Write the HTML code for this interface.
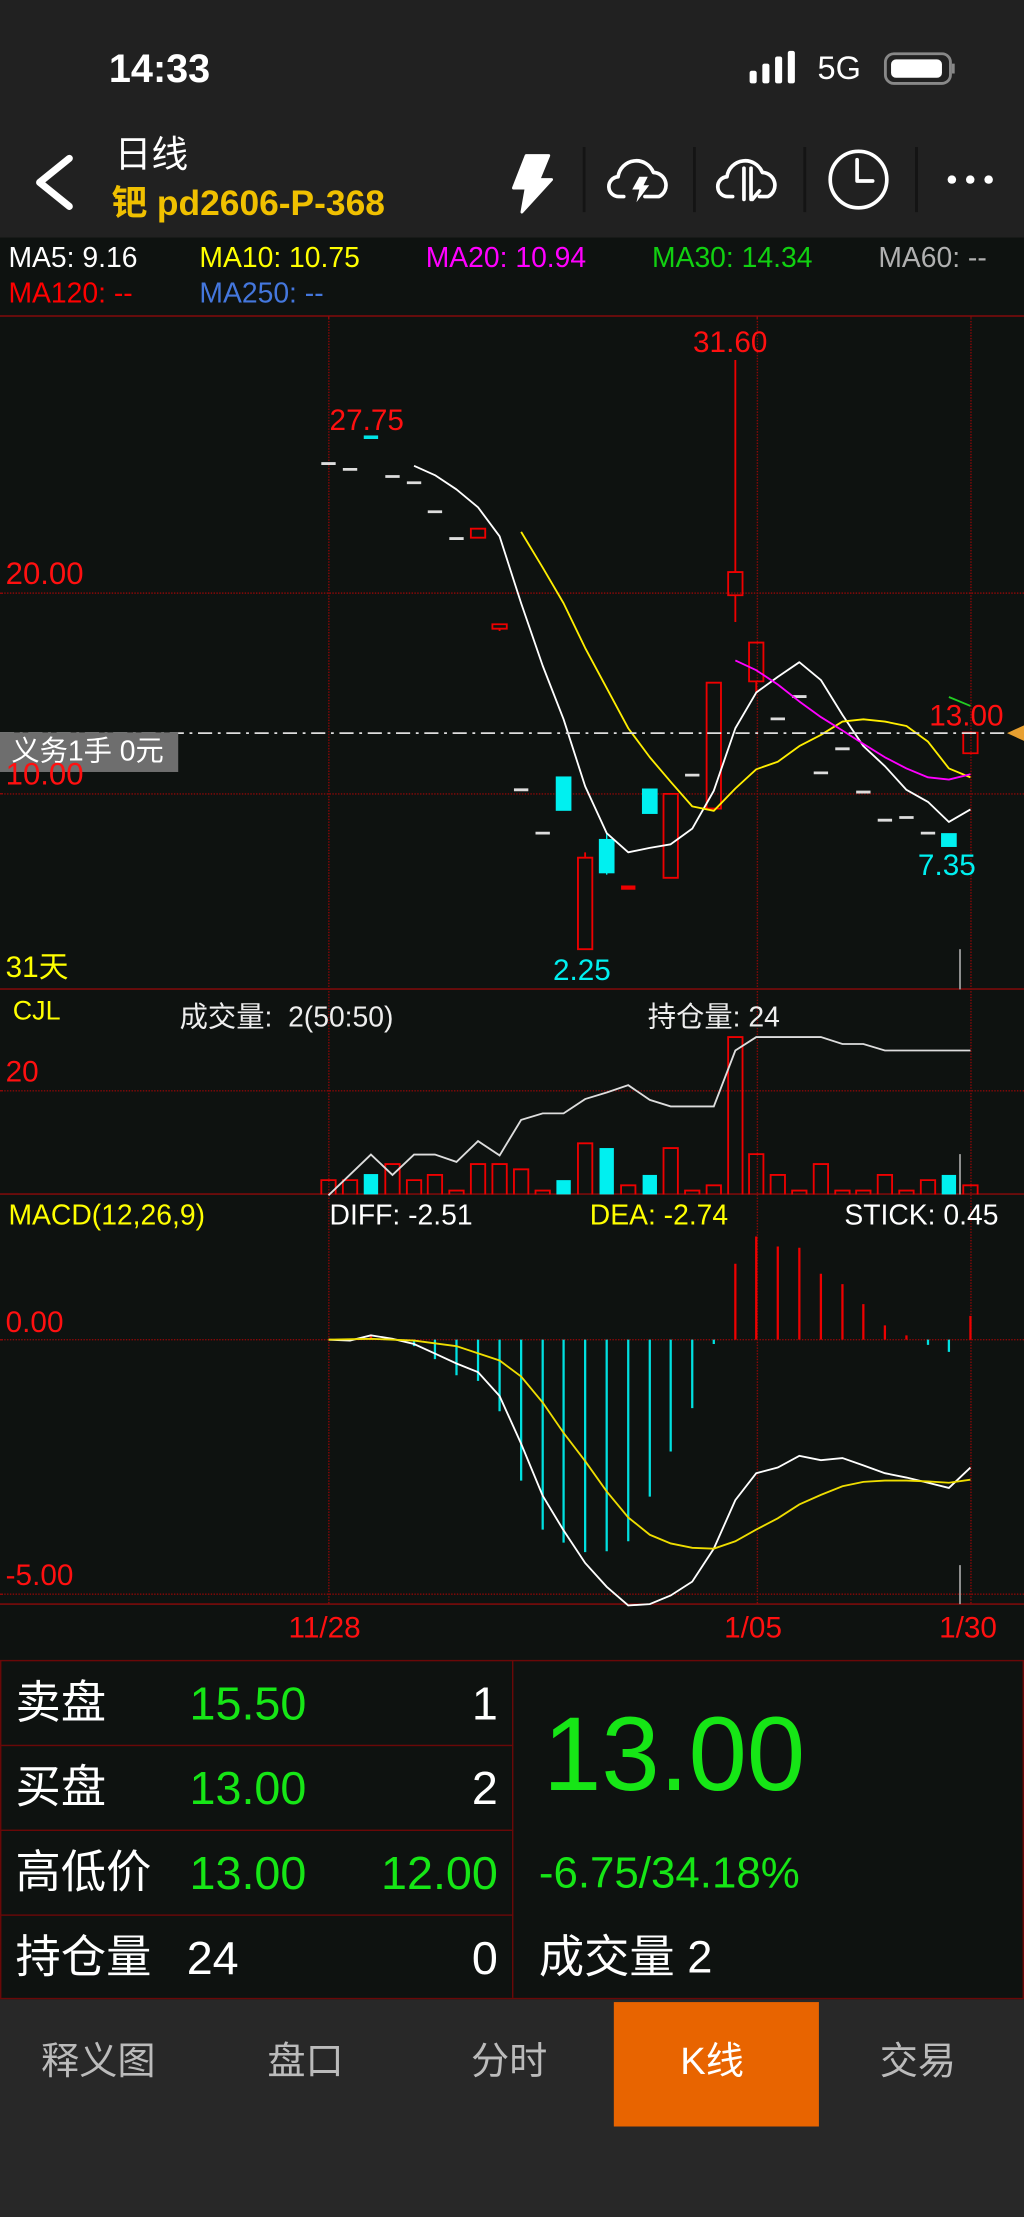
<!DOCTYPE html>
<html><head><meta charset="utf-8">
<style>
*{margin:0;padding:0;box-sizing:border-box}
html,body{width:1024px;height:2217px;overflow:hidden;background:#282828}
#w{position:absolute;left:0;top:0;width:724px;height:1568px;transform:scale(1.41436,1.4139);transform-origin:0 0;font-family:"Liberation Sans","Noto Sans CJK SC",sans-serif;background:#282828}
.a{position:absolute;white-space:nowrap}
.t{position:absolute;white-space:nowrap;line-height:1}
.vg{position:absolute;width:0;border-left:1px dotted #8a0808}
.hg{position:absolute;height:0;border-top:1px dotted #8a0808;left:0;width:724px}
.hs{position:absolute;height:0;border-top:1px solid #8a0a0a;left:0;width:724px}
svg{position:absolute;overflow:visible}
.g{color:#16e616}
.w{color:#fff}
</style></head><body><div id="w">
<!-- status+header -->
<div class="a" style="left:0;top:0;width:724px;height:168px;background:#212121"></div>
<div class="t w" style="left:77px;top:35px;font-size:28px;font-weight:bold">14:33</div>
<svg style="left:0;top:0" width="724" height="168">
 <g fill="#fff">
  <rect x="530" y="50" width="5" height="9" rx="1.5"/><rect x="539" y="45" width="5" height="14" rx="1.5"/><rect x="548" y="40" width="5" height="19" rx="1.5"/><rect x="557" y="36" width="5" height="23" rx="1.5"/>
 </g>
 <rect x="626" y="38" width="46" height="21" rx="6" fill="none" stroke="#888" stroke-width="2"/>
 <rect x="630" y="42" width="36" height="13" rx="3.5" fill="#fff"/>
 <path d="M674 45 v7" stroke="#888" stroke-width="2"/>
 <path d="M49 112 L28 129 L49 146" fill="none" stroke="#fff" stroke-width="5" stroke-linecap="round" stroke-linejoin="round"/>
 <path d="M372 110 L388 110 L381 127 L390 127 L369 150 L372 133 L363 133 Z" fill="#fff" stroke="#fff" stroke-width="2" stroke-linejoin="round"/>
 <g stroke="#141414" stroke-width="2"><path d="M413 104V150M491 104V150M569 104V150M648 104V150"/></g>
 <g fill="none" stroke="#fff" stroke-width="2.6" stroke-linecap="round" stroke-linejoin="round">
  <path d="M441 139 h-3 a7 7 0 0 1 -1 -14 a13 13 0 0 1 25 -3 a9 9 0 0 1 4 17 h-10"/>
  <path d="M518 139 h-3 a7 7 0 0 1 -1 -14 a13 13 0 0 1 25 -3 a9 9 0 0 1 4 17 h-6"/>
  <path d="M526 141 V119 M531 141 V119 M532 141 l5 -6"/>
  <circle cx="607" cy="127" r="20"/>
  <path d="M606 113 V128 H617"/>
 </g>
 <path d="M452 125 L458 125 L455 131 L459 131 L450 143 L452 134 L447 134 Z" fill="#fff"/>
 <g fill="#fff"><circle cx="673" cy="127" r="3"/><circle cx="686" cy="127" r="3"/><circle cx="699" cy="127" r="3"/></g>
</svg>
<div class="t" style="left:603px;top:37px;font-size:23px;color:#fff;left:578px">5G</div>
<div class="t w" style="left:81px;top:96px;font-size:26px">日线</div>
<div class="t" style="left:79px;top:132px;font-size:25px;font-weight:bold;color:#f0c000">钯 pd2606-P-368</div>

<!-- chart area -->
<div class="a" style="left:0;top:168px;width:724px;height:1006px;background:#0e1210"></div>
<div class="t" style="left:6px;top:173px;font-size:20px;color:#fff">MA5: 9.16</div>
<div class="t" style="left:141px;top:173px;font-size:20px;color:#ffff00">MA10: 10.75</div>
<div class="t" style="left:301px;top:173px;font-size:20px;color:#ff00ff">MA20: 10.94</div>
<div class="t" style="left:461px;top:173px;font-size:20px;color:#11d011">MA30: 14.34</div>
<div class="t" style="left:621px;top:173px;font-size:20px;color:#b0b0b0">MA60: --</div>
<div class="t" style="left:6px;top:198px;font-size:20px;color:#ff0000">MA120: --</div>
<div class="t" style="left:141px;top:198px;font-size:20px;color:#4477dd">MA250: --</div>

<div class="hs" style="top:223px"></div>
<div class="hs" style="top:699px"></div>
<div class="hs" style="top:844px"></div>
<div class="hs" style="top:1134px"></div>
<div class="hg" style="top:419px"></div>
<div class="hg" style="top:561px"></div>
<div class="hg" style="top:771px"></div>
<div class="hg" style="top:947px"></div>
<div class="hg" style="top:1127px"></div>
<div class="vg" style="left:232px;top:224px;height:910px"></div>
<div class="vg" style="left:535px;top:224px;height:910px"></div>
<div class="vg" style="left:686px;top:224px;height:910px"></div>

<!-- main candles: viewBox mapped from zoom coords -->
<svg style="left:0;top:212.1px" width="724" height="495" viewBox="0 0 1568 1568" preserveAspectRatio="none">
 <g stroke="#ddd" stroke-width="2" vector-effect="non-scaling-stroke">
  <path vector-effect="non-scaling-stroke" d="M492 367h22M525 380h22M590 396h22M623 410h22M655 475h22M688 535h22M787 1098h22M820 1195h22M1049 1065h22M1180 939h22M1213 889h22M1246 1060h22M1279 1006h22M1311 1103h22M1344 1166h22M1377 1160h22M1410 1195h22"/>
 </g>
 <path vector-effect="non-scaling-stroke" d="M557 308h22" stroke="#00e5e5" stroke-width="2.5"/>
 <path vector-effect="non-scaling-stroke" d="M951 1317h22" stroke="#ee0000" stroke-width="3"/>
 <g fill="none" stroke="#ee0000" stroke-width="1.3">
  <rect vector-effect="non-scaling-stroke" x="721" y="513" width="22" height="20"/>
  <rect vector-effect="non-scaling-stroke" x="754" y="727" width="22" height="10"/>
  <rect vector-effect="non-scaling-stroke" x="885" y="1250" width="22" height="205"/>
  <rect vector-effect="non-scaling-stroke" x="1016" y="1107" width="22" height="188"/>
  <rect vector-effect="non-scaling-stroke" x="1082" y="858" width="22" height="282"/>
  <rect vector-effect="non-scaling-stroke" x="1115" y="610" width="22" height="52"/>
  <rect vector-effect="non-scaling-stroke" x="1147" y="768" width="22" height="87"/>
  <rect vector-effect="non-scaling-stroke" x="1475" y="970" width="22" height="46"/>
  <path vector-effect="non-scaling-stroke" d="M1126 135V610M1126 662V722M896 1238V1250M1158 855V880M765 737V742"/>
 </g>
 <g fill="#00f0f0">
  <rect x="851" y="1068" width="24" height="77"/>
  <rect x="917" y="1208" width="24" height="77"/>
  <rect x="983" y="1095" width="24" height="57"/>
  <rect x="1441" y="1195" width="24" height="31"/>
 </g>
 <path vector-effect="non-scaling-stroke" d="M929 1195V1288" stroke="#00f0f0" stroke-width="1"/>
 <g fill="none" stroke-width="1.3" stroke-linejoin="round">
  <polyline vector-effect="non-scaling-stroke" stroke="#fff" points="634,372 666,393 699,425 732,465 765,530 798,680 831,820 863,940 896,1090 929,1195 962,1238 995,1228 1027,1220 1060,1185 1093,1100 1126,960 1158,880 1191,845 1224,812 1257,852 1290,930 1322,1000 1355,1045 1388,1098 1421,1125 1453,1170 1486,1142"/>
  <polyline vector-effect="non-scaling-stroke" stroke="#ffee00" points="798,520 831,600 863,680 896,780 929,870 962,960 995,1025 1027,1080 1060,1135 1093,1145 1126,1095 1158,1052 1191,1035 1224,1000 1257,975 1290,945 1322,940 1355,945 1388,955 1421,990 1453,1050 1486,1070"/>
  <polyline vector-effect="non-scaling-stroke" stroke="#ff00ff" points="1126,808 1158,830 1191,862 1224,900 1257,935 1290,965 1322,995 1355,1025 1388,1050 1421,1070 1453,1075 1486,1063"/>
  <path vector-effect="non-scaling-stroke" d="M1453 890L1486 910" stroke="#22cc22"/>
  <path vector-effect="non-scaling-stroke" d="M1470 1455V1545" stroke="#999"/>
 </g>
</svg>
<svg style="left:0;top:512px" width="724" height="14">
 <path d="M0 6.5H711" stroke="#ddd" stroke-width="1.3" stroke-dasharray="10 4 2 4"/>
 <path d="M712 6.5 L724 1 V12 Z" fill="#e8a030"/>
</svg>
<div class="a" style="left:0;top:518px;width:126px;height:28px;background:#6e6e6e"></div>
<div class="t" style="left:8px;top:522px;font-size:20px;color:#fff">义务1手 0元</div>
<div class="t" style="left:4px;top:395px;font-size:22px;color:#ff1010">20.00</div>
<div class="t" style="left:4px;top:537px;font-size:22px;color:#ff1010">10.00</div>
<div class="t" style="left:4px;top:674px;font-size:21px;color:#ffff00">31天</div>
<div class="t" style="left:233px;top:287px;font-size:21px;color:#ff1010">27.75</div>
<div class="t" style="left:490px;top:232px;font-size:21px;color:#ff1010">31.60</div>
<div class="t" style="left:657px;top:496px;font-size:21px;color:#ff1010">13.00</div>
<div class="t" style="left:649px;top:602px;font-size:21px;color:#00f0f0">7.35</div>
<div class="t" style="left:391px;top:676px;font-size:21px;color:#00f0f0">2.25</div>

<!-- volume + macd -->
<svg style="left:0;top:692.9px" width="724" height="480.8" viewBox="0 0 1568 1568" preserveAspectRatio="none">
 <g fill="none" stroke="#ee0000" stroke-width="1.3">
  <path vector-effect="non-scaling-stroke" d="M492 495V462H514V495M525 495V462H547V495M590 495V425H612V495M623 495V462H645V495M655 495V450H677V495M688 495V486H710V495M721 495V425H743V495M754 495V425H776V495M787 495V437H809V495M820 495V486H842V495M885 495V377H907V495M951 495V474H973V495M1016 495V388H1038V495M1049 495V486H1071V495M1082 495V474H1104V495M1115 495V132H1137V495M1147 495V402H1169V495M1180 495V450H1202V495M1213 495V486H1235V495M1246 495V425H1268V495M1279 495V486H1301V495M1311 495V486H1333V495M1344 495V450H1366V495M1377 495V486H1399V495M1410 495V462H1432V495M1475 495V474H1497V495"/>
 </g>
 <g fill="#00f0f0">
  <rect x="557" y="448" width="22" height="47"/><rect x="852" y="462" width="22" height="33"/><rect x="918" y="388" width="22" height="107"/><rect x="984" y="450" width="22" height="45"/><rect x="1442" y="450" width="22" height="45"/>
 </g>
 <polyline vector-effect="non-scaling-stroke" fill="none" stroke="#ddd" stroke-width="1.3" points="503,497 568,403 601,450 634,403 666,403 699,420 732,372 765,405 798,323 831,308 863,308 896,275 929,260 962,243 995,277 1027,292 1060,292 1093,292 1126,163 1158,132 1191,132 1224,132 1257,132 1290,148 1322,148 1355,163 1388,163 1421,163 1453,163 1486,163"/>
 <path vector-effect="non-scaling-stroke" d="M1470 402V495M1470 1350V1440" stroke="#999" stroke-width="1.3"/>
 <path vector-effect="non-scaling-stroke" stroke="#00e0e0" stroke-width="1.6" d="M634 830V845M666 830V875M699 830V912M732 830V925M765 830V995M798 830V1155M831 830V1268M863 830V1298M896 830V1320M929 830V1318M962 830V1295M995 830V1192M1027 830V1088M1060 830V988M1093 830V840M1421 830V842M1453 830V858"/>
 <path vector-effect="non-scaling-stroke" stroke="#ee0000" stroke-width="1.6" d="M568 830V818M1126 830V655M1158 830V592M1191 830V615M1224 830V618M1257 830V678M1290 830V702M1322 830V748M1355 830V797M1388 830V820M1486 830V775"/>
 <polyline vector-effect="non-scaling-stroke" fill="none" stroke="#fff" stroke-width="1.3" points="503,830 536,832 568,820 601,828 634,840 666,862 699,885 732,905 765,960 798,1070 831,1190 863,1270 896,1345 929,1400 962,1443 995,1440 1027,1420 1060,1388 1093,1312 1126,1200 1158,1138 1191,1125 1224,1098 1257,1108 1290,1103 1322,1120 1355,1138 1388,1148 1421,1160 1453,1172 1486,1125"/>
 <polyline vector-effect="non-scaling-stroke" fill="none" stroke="#eedd00" stroke-width="1.3" points="503,830 568,828 634,832 699,845 765,878 798,915 831,975 863,1045 896,1110 929,1180 962,1240 995,1280 1027,1300 1060,1310 1093,1312 1126,1295 1158,1268 1191,1242 1224,1210 1257,1188 1290,1168 1322,1158 1355,1155 1388,1155 1421,1157 1453,1160 1486,1153"/>
</svg>
<div class="t" style="left:9px;top:706px;font-size:19px;color:#ffff00">CJL</div>
<div class="t" style="left:127px;top:710px;font-size:20px;color:#eee">成交量:&nbsp; 2(50:50)</div>
<div class="t" style="left:458px;top:710px;font-size:20px;color:#eee">持仓量: 24</div>
<div class="t" style="left:4px;top:748px;font-size:21px;color:#ff1010">20</div>
<div class="t" style="left:6px;top:850px;font-size:20px;color:#ffff00">MACD(12,26,9)</div>
<div class="t" style="left:233px;top:850px;font-size:20px;color:#fff">DIFF: -2.51</div>
<div class="t" style="left:417px;top:850px;font-size:20px;color:#ffff00">DEA: -2.74</div>
<div class="t" style="left:597px;top:850px;font-size:20px;color:#fff">STICK: 0.45</div>
<div class="t" style="left:4px;top:925px;font-size:21px;color:#ff1010">0.00</div>
<div class="t" style="left:4px;top:1104px;font-size:21px;color:#ff1010">-5.00</div>
<div class="t" style="left:204px;top:1141px;font-size:21px;color:#ff1010">11/28</div>
<div class="t" style="left:512px;top:1141px;font-size:21px;color:#ff1010">1/05</div>
<div class="t" style="left:664px;top:1141px;font-size:21px;color:#ff1010">1/30</div>

<!-- quote panel -->
<div class="a" style="left:0;top:1173.5px;width:724px;height:240px;border:1.3px solid #6a0808;background:#0e1210"></div>
<div class="a" style="left:362px;top:1174px;width:0;height:239px;border-left:1.3px solid #6a0808"></div>
<div class="a" style="left:0;top:1233.5px;width:363px;height:0;border-top:1.3px solid #6a0808"></div>
<div class="a" style="left:0;top:1294px;width:363px;height:0;border-top:1.3px solid #6a0808"></div>
<div class="a" style="left:0;top:1354px;width:363px;height:0;border-top:1.3px solid #6a0808"></div>
<div class="t w" style="left:11px;top:1188px;font-size:32px">卖盘</div>
<div class="t w" style="left:11px;top:1248px;font-size:32px">买盘</div>
<div class="t w" style="left:11px;top:1308px;font-size:32px">高低价</div>
<div class="t w" style="left:11px;top:1368px;font-size:32px">持仓量</div>
<div class="t g" style="left:134px;top:1188px;font-size:33px">15.50</div>
<div class="t g" style="left:134px;top:1248px;font-size:33px">13.00</div>
<div class="t g" style="left:134px;top:1308px;font-size:33px">13.00</div>
<div class="t w" style="left:132px;top:1368px;font-size:33px">24</div>
<div class="t w" style="right:372px;top:1188px;font-size:33px">1</div>
<div class="t w" style="right:372px;top:1248px;font-size:33px">2</div>
<div class="t g" style="right:372px;top:1308px;font-size:33px">12.00</div>
<div class="t w" style="right:372px;top:1368px;font-size:33px">0</div>
<div class="t g" style="left:384px;top:1204px;font-size:74px">13.00</div>
<div class="t g" style="left:381px;top:1309px;font-size:31px">-6.75/34.18%</div>
<div class="t w" style="left:381px;top:1368px;font-size:32px">成交量 2</div>

<!-- tabs -->
<div class="a" style="left:434px;top:1416px;width:145px;height:88px;background:#e86400"></div>
<div class="t" style="left:29px;top:1445px;font-size:27px;color:#bbb">释义图</div>
<div class="t" style="left:189px;top:1445px;font-size:27px;color:#bbb">盘口</div>
<div class="t" style="left:333px;top:1445px;font-size:27px;color:#bbb">分时</div>
<div class="t" style="left:481px;top:1445px;font-size:27px;color:#fff">K线</div>
<div class="t" style="left:622px;top:1445px;font-size:27px;color:#bbb">交易</div>
</div></body></html>
